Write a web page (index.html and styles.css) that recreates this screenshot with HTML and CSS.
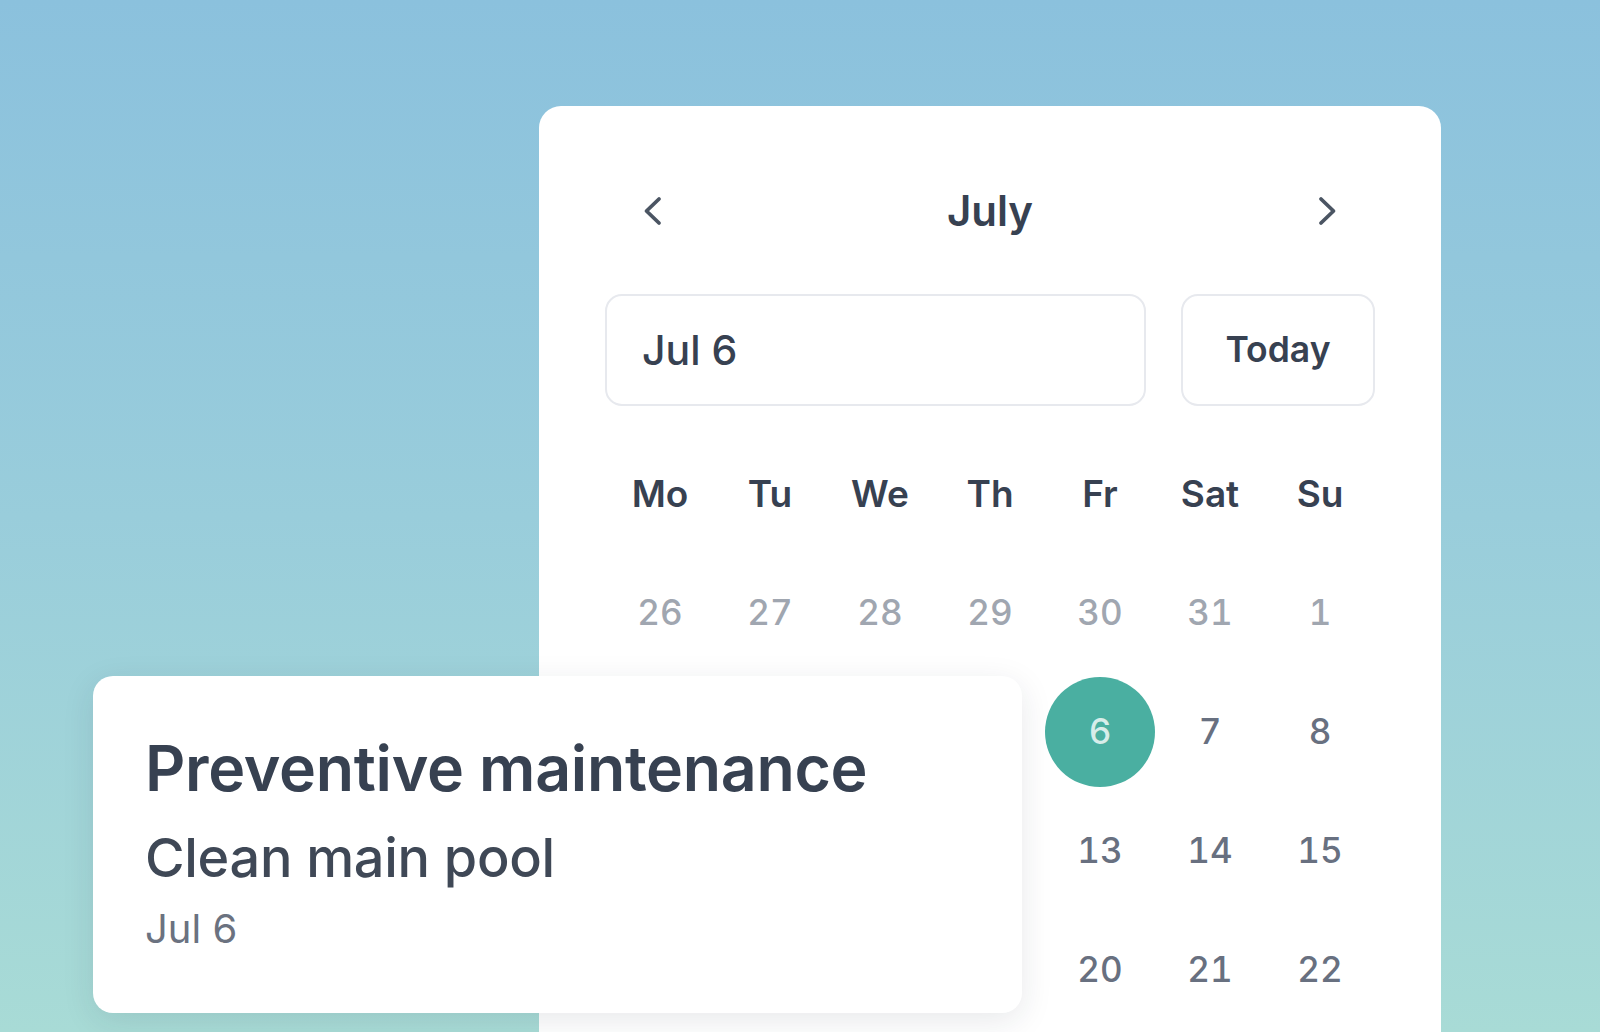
FILE: index.html
```html
<!DOCTYPE html>
<html lang="en">
<head>
<meta charset="utf-8">
<title>Schedule</title>
<link rel="stylesheet" href="styles.css">
</head>
<body>
<main class="stage">
  <section class="calendar">
    <header class="cal-head">
      <button class="nav-btn" aria-label="Previous month">
        <svg width="28" height="32" viewBox="0 0 28 32"><path d="M19 4 L6.5 16 L19 28" /></svg>
      </button>
      <h2 class="month">July</h2>
      <button class="nav-btn" aria-label="Next month">
        <svg width="28" height="32" viewBox="0 0 28 32"><path d="M9 4 L21.5 16 L9 28" /></svg>
      </button>
    </header>

    <div class="date-row">
      <div class="date-input">Jul 6</div>
      <button class="today-btn">Today</button>
    </div>

    <div class="grid">
      <div class="wd">Mo</div><div class="wd">Tu</div><div class="wd">We</div><div class="wd">Th</div><div class="wd">Fr</div><div class="wd">Sat</div><div class="wd">Su</div>

      <div class="day muted">26</div><div class="day muted">27</div><div class="day muted">28</div><div class="day muted">29</div><div class="day muted">30</div><div class="day muted">31</div><div class="day muted">1</div>

      <div class="day"></div><div class="day"></div><div class="day"></div><div class="day"></div><div class="day"><span class="selected">6</span></div><div class="day">7</div><div class="day">8</div>

      <div class="day"></div><div class="day"></div><div class="day"></div><div class="day"></div><div class="day">13</div><div class="day">14</div><div class="day">15</div>

      <div class="day"></div><div class="day"></div><div class="day"></div><div class="day"></div><div class="day">20</div><div class="day">21</div><div class="day">22</div>
    </div>
  </section>

  <article class="event-card">
    <h1 class="event-type">Preventive maintenance</h1>
    <p class="event-title">Clean main pool</p>
    <p class="event-date">Jul 6</p>
  </article>
</main>
</body>
</html>
```

FILE: styles.css
```css
* {
  box-sizing: border-box;
}

html, body {
  margin: 0;
  height: 100%;
}

body {
  font-family: Inter, "Noto Sans", sans-serif;
  background: linear-gradient(180deg, #8bc1dd 0%, #99cddb 50%, #a8dbd6 100%);
  overflow: hidden;
}

.stage {
  position: relative;
  width: 1600px;
  height: 1032px;
  padding: 106px 0 0 539px;
}

/* Month picker */
.calendar {
  width: 902px;
  height: 960px;
  background: #ffffff;
  border-radius: 22px;
  padding: 83px 66px 0;
}

.cal-head {
  display: flex;
  align-items: center;
  justify-content: space-between;
  height: 44px;
}

.nav-btn {
  width: 98px;
  height: 44px;
  border: 0;
  padding: 0;
  background: none;
  display: flex;
  align-items: center;
  justify-content: center;
}

.nav-btn svg path {
  fill: none;
  stroke: #4b5563;
  stroke-width: 3.8;
  stroke-linecap: round;
  stroke-linejoin: round;
}

.month {
  margin: 0;
  font-size: 42px;
  line-height: 1;
  font-weight: 600;
  color: #374151;
}

.date-row {
  display: flex;
  gap: 35px;
  margin-top: 61px;
  height: 112px;
}

.date-input {
  flex: 1;
  display: flex;
  align-items: center;
  padding-left: 35px;
  border: 2px solid #e7e9ee;
  border-radius: 17px;
  font-size: 41px;
  line-height: 1;
  font-weight: 500;
  color: #374151;
}

.today-btn {
  width: 194px;
  border: 2px solid #e7e9ee;
  border-radius: 17px;
  background: #ffffff;
  font-family: inherit;
  font-size: 35.5px;
  line-height: 1;
  font-weight: 600;
  color: #374151;
}

.grid {
  display: grid;
  grid-template-columns: repeat(7, 110px);
  grid-auto-rows: 119px;
  margin-top: 28px;
}

.wd,
.day {
  display: flex;
  align-items: center;
  justify-content: center;
  line-height: 1;
}

.wd {
  font-size: 37px;
  font-weight: 600;
  color: #374151;
}

.day {
  font-size: 35px;
  font-weight: 500;
  color: #687080;
  font-variant-numeric: tabular-nums;
}

.day.muted {
  color: #a0a6b0;
}

.selected {
  width: 110px;
  height: 110px;
  border-radius: 50%;
  background: #4aafa1;
  color: rgba(255, 255, 255, 0.78);
  display: flex;
  align-items: center;
  justify-content: center;
}

/* Floating event card laid over the calendar */
.event-card {
  position: absolute;
  left: 93px;
  top: 676px;
  width: 929px;
  height: 337px;
  background: #ffffff;
  border-radius: 20px;
  padding: 61px 52px 0;
  box-shadow: 0 8px 32px rgba(30, 41, 59, 0.1);
}

.event-type {
  margin: 0;
  font-size: 62.6px;
  line-height: 1;
  font-weight: 600;
  color: #374151;
  letter-spacing: -0.3px;
}

.event-title {
  margin: 31px 0 0;
  font-size: 54px;
  line-height: 1;
  font-weight: 500;
  color: #3f4856;
  letter-spacing: -0.3px;
}

.event-date {
  margin: 24px 0 0;
  font-size: 40px;
  line-height: 1;
  font-weight: 400;
  color: #6b7280;
}
```
